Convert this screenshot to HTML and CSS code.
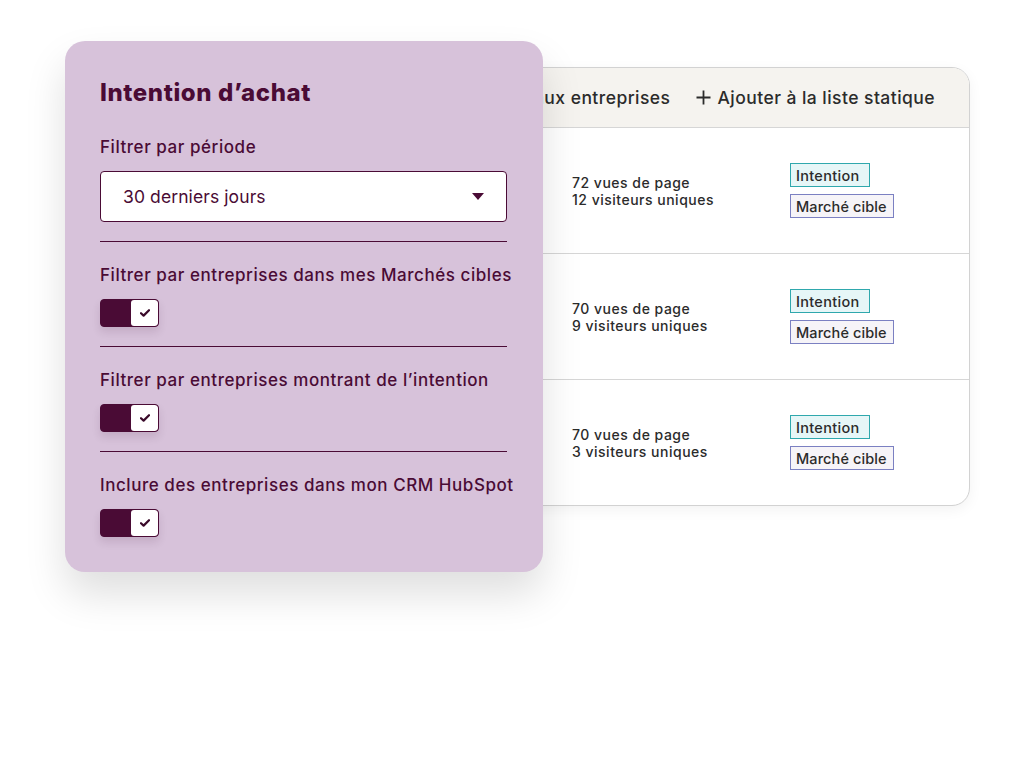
FILE: index.html
```html
<!DOCTYPE html>
<html lang="fr">
<head>
<meta charset="utf-8">
<title>Intention d'achat</title>
<link rel="stylesheet" href="styles.css">
</head>
<body>
<div class="stage">
  <section class="filters">
    <h1 class="title">Intention d’achat</h1>
    <div class="label first">Filtrer par période</div>
    <div class="select">
      <span>30 derniers jours</span>
      <svg class="caret" width="12" height="7" viewBox="0 0 12 7"><path d="M0 0h12L6 7z" fill="#4a0b35"/></svg>
    </div>
    <div class="group">
      <div class="label">Filtrer par entreprises dans mes Marchés cibles</div>
      <div class="toggle"><span class="track"></span><span class="knob"><svg width="10" height="8" viewBox="0 0 10 8"><path d="M1 4.2l2.6 2.4L9 1.2" fill="none" stroke="#3a0a2a" stroke-width="2.2" stroke-linecap="round" stroke-linejoin="round"/></svg></span></div>
    </div>
    <div class="group">
      <div class="label">Filtrer par entreprises montrant de l’intention</div>
      <div class="toggle"><span class="track"></span><span class="knob"><svg width="10" height="8" viewBox="0 0 10 8"><path d="M1 4.2l2.6 2.4L9 1.2" fill="none" stroke="#3a0a2a" stroke-width="2.2" stroke-linecap="round" stroke-linejoin="round"/></svg></span></div>
    </div>
    <div class="group">
      <div class="label">Inclure des entreprises dans mon CRM HubSpot</div>
      <div class="toggle"><span class="track"></span><span class="knob"><svg width="10" height="8" viewBox="0 0 10 8"><path d="M1 4.2l2.6 2.4L9 1.2" fill="none" stroke="#3a0a2a" stroke-width="2.2" stroke-linecap="round" stroke-linejoin="round"/></svg></span></div>
    </div>
  </section>

  <section class="table">
    <div class="thead">
      <span class="action">aux entreprises</span>
      <span class="action add"><svg width="15" height="15" viewBox="0 0 15 15"><path d="M7.5 0.5v14M0.5 7.5h14" stroke="#2b2b2b" stroke-width="1.8"/></svg>Ajouter à la liste statique</span>
    </div>
    <div class="row">
      <div class="stats"><div>72 vues de page</div><div>12 visiteurs uniques</div></div>
      <div class="tags"><span class="tag intent">Intention</span><span class="tag market">Marché cible</span></div>
    </div>
    <div class="row">
      <div class="stats"><div>70 vues de page</div><div>9 visiteurs uniques</div></div>
      <div class="tags"><span class="tag intent">Intention</span><span class="tag market">Marché cible</span></div>
    </div>
    <div class="row last">
      <div class="stats"><div>70 vues de page</div><div>3 visiteurs uniques</div></div>
      <div class="tags"><span class="tag intent">Intention</span><span class="tag market">Marché cible</span></div>
    </div>
  </section>
</div>
</body>
</html>
```
FILE: styles.css
```css
* { box-sizing: border-box; }
html, body { margin: 0; padding: 0; background: #ffffff; }
body {
  width: 1030px;
  height: 772px;
  overflow: hidden;
  font-family: Inter, "Noto Sans", sans-serif;
}
.stage {
  display: flex;
  align-items: flex-start;
  padding: 41px 0 0 65px;
}
.filters {
  position: relative;
  z-index: 2;
  flex: none;
  width: 478px;
  height: 531px;
  margin-right: -43px;
  background: #d7c2da;
  border-radius: 20px;
  padding: 37px 35px 0 35px;
  color: #4a0b35;
  box-shadow: 0 22px 40px rgba(0, 0, 0, 0.13);
}
.title {
  margin: 0;
  font-size: 24px;
  line-height: 30px;
  font-weight: 800;
  letter-spacing: 0.6px;
  color: #4a0b35;
}
.label {
  font-size: 17px;
  line-height: 24px;
  font-weight: 500;
  letter-spacing: 0.55px;
  color: #4a0b35;
  white-space: nowrap;
}
.label.first { margin-top: 27px; }
.select {
  margin-top: 12px;
  height: 51px;
  width: 407px;
  background: #ffffff;
  border: 1.5px solid #4a0b35;
  border-radius: 4px;
  display: flex;
  align-items: center;
  justify-content: space-between;
  padding: 0 22px 0 22px;
  font-size: 17.5px;
  letter-spacing: 0.1px;
  color: #4a0b35;
}
.caret { display: block; }
.group {
  margin-top: 19px;
  width: 407px;
  border-top: 1.5px solid #4a0b35;
  padding-top: 21px;
}
.toggle {
  margin-top: 12px;
  width: 59px;
  height: 28px;
  display: flex;
  border-radius: 4px;
  overflow: hidden;
  background: #4a0b35;
  border: 1.5px solid #4a0b35;
  box-shadow: 0 5px 8px rgba(60, 20, 50, 0.12);
}
.track { flex: 1; }
.knob {
  width: 27px;
  background: #ffffff;
  border-radius: 3px;
  display: flex;
  align-items: center;
  justify-content: center;
}
.knob svg { display: block; }

.table {
  position: relative;
  z-index: 1;
  flex: none;
  width: 470px;
  margin-top: 26px;
  background: #ffffff;
  border: 1px solid #d2d2d2;
  border-radius: 18px;
  overflow: hidden;
  box-shadow: 0 4px 14px rgba(0, 0, 0, 0.05);
  color: #2b2b2b;
}
.thead {
  height: 60px;
  background: #f5f3ef;
  border-bottom: 1px solid #d6d6d6;
  display: flex;
  align-items: center;
  justify-content: flex-end;
  gap: 26px;
  padding-right: 34px;
  font-size: 17.5px;
  font-weight: 500;
  letter-spacing: 0.45px;
  white-space: nowrap;
}
.action { display: flex; align-items: center; }
.add svg { margin-right: 6px; }
.row {
  height: 126px;
  border-bottom: 1px solid #d6d6d6;
  display: flex;
  align-items: center;
  padding-left: 71px;
}
.row.last { border-bottom: none; height: 125px; }
.stats {
  width: 218px;
  font-size: 14px;
  line-height: 17px;
  font-weight: 500;
  letter-spacing: 0.5px;
}
.tags {
  display: flex;
  flex-direction: column;
  align-items: flex-start;
  gap: 7px;
}
.tag {
  height: 24px;
  display: flex;
  align-items: center;
  padding: 0 5px;
  font-size: 14.5px;
  font-weight: 500;
  letter-spacing: 0.3px;
  white-space: nowrap;
  color: #2b2b2b;
}
.intent {
  width: 80px;
  background: #e6f6f7;
  border: 1.5px solid #2fa8ad;
}
.market {
  width: 104px;
  letter-spacing: 0.1px;
  background: #f6f4f8;
  border: 1.5px solid #7b80c2;
}
```
